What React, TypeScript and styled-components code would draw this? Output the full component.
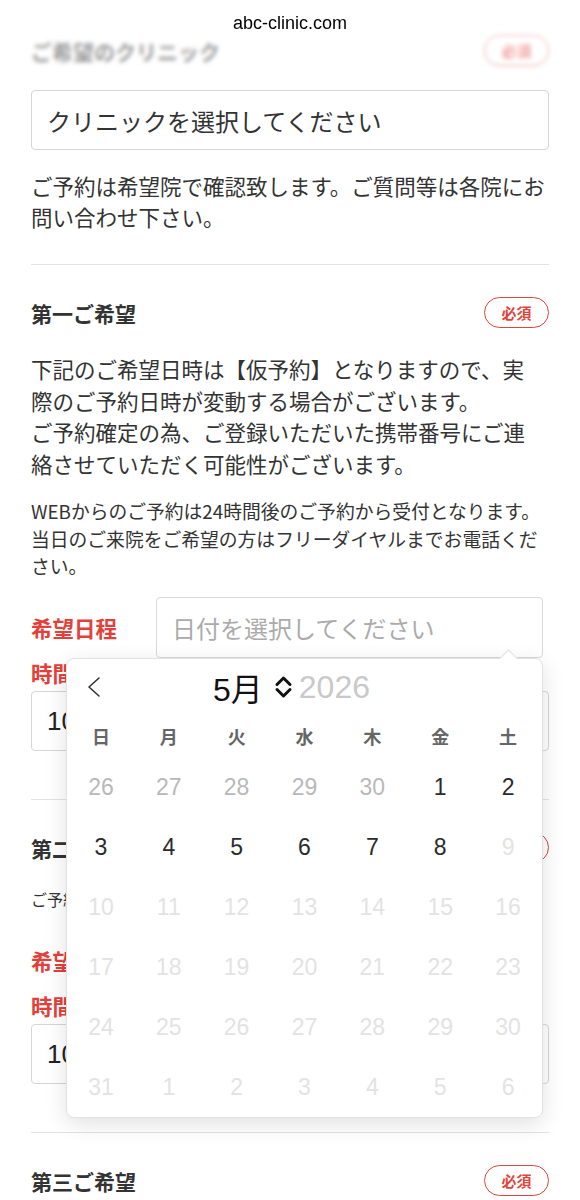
import styled, { createGlobalStyle } from "styled-components"

type DayKind = "outside" | "active" | "disabled"

const weekdays = ["日", "月", "火", "水", "木", "金", "土"]

const buildDays = () => {
  const days: { label: number; kind: DayKind }[] = []
  for (let d = 26; d <= 30; d++) days.push({ label: d, kind: "outside" })
  for (let d = 1; d <= 31; d++) days.push({ label: d, kind: d <= 8 ? "active" : "disabled" })
  for (let d = 1; d <= 6; d++) days.push({ label: d, kind: "disabled" })
  return days
}

const Calendar = () => (
  <Popover>
    <CalHeader>
      <svg width="14" height="22" viewBox="0 0 14 22">
        <polyline points="12,2 2,11 12,20" fill="none" stroke="#333" strokeWidth="1.6" strokeLinecap="round" strokeLinejoin="round" />
      </svg>
      <MonthTitle>
        <Month>5月</Month>
        <Stepper width="19" height="24" viewBox="0 0 19 24">
          <polyline points="3,9.5 9.5,3 16,9.5" fill="none" stroke="#111" strokeWidth="3" strokeLinecap="round" strokeLinejoin="round" />
          <polyline points="3,14.5 9.5,21 16,14.5" fill="none" stroke="#111" strokeWidth="3" strokeLinecap="round" strokeLinejoin="round" />
        </Stepper>
        <Year>2026</Year>
      </MonthTitle>
    </CalHeader>
    <WeekRow>
      {weekdays.map((w) => (
        <span key={w}>{w}</span>
      ))}
    </WeekRow>
    <DayGrid>
      {buildDays().map((d, i) => (
        <Day key={i} $kind={d.kind}>{d.label}</Day>
      ))}
    </DayGrid>
  </Popover>
)

const App = () => {
  return (
    <>
      <GlobalStyle />
      <TopBar>abc-clinic.com</TopBar>
      <Page>
        <Section $first>
          <HeaderRow>
            <Heading>ご希望のクリニック</Heading>
            <Badge>必須</Badge>
          </HeaderRow>
          <SelectBox>クリニックを選択してください</SelectBox>
          <Text $size="body" $gap={19.5}>
            ご予約は希望院で確認致します。ご質問等は各院にお<br />問い合わせ下さい。
          </Text>
        </Section>

        <Section>
          <HeaderRow>
            <Heading>第一ご希望</Heading>
            <Badge>必須</Badge>
          </HeaderRow>
          <Text $size="body" $gap={25}>
            下記のご希望日時は【仮予約】となりますので、実<br />
            際のご予約日時が変動する場合がございます。<br />
            ご予約確定の為、ご登録いただいた携帯番号にご連<br />
            絡させていただく可能性がございます。
          </Text>
          <Text $size="small" $gap={18}>
            WEBからのご予約は24時間後のご予約から受付となります。<br />
            当日のご来院をご希望の方はフリーダイヤルまでお電話くだ<br />
            さい。
          </Text>
          <DateRow $gap={17.5}>
            <FieldLabel>希望日程</FieldLabel>
            <DateField>
              日付を選択してください
              <Calendar />
            </DateField>
          </DateRow>
          <FieldLabel>時間</FieldLabel>
          <TimeField>10:00</TimeField>
        </Section>

        <Section>
          <HeaderRow>
            <Heading>第二ご希望</Heading>
            <Badge>必須</Badge>
          </HeaderRow>
          <Text $size="note" $gap={24}>
            ご予約状況により、ご希望に添えない場合がございます。
          </Text>
          <DateRow $gap={19}>
            <FieldLabel>希望日程</FieldLabel>
            <DateField>日付を選択してください</DateField>
          </DateRow>
          <FieldLabel>時間</FieldLabel>
          <TimeField>10:00</TimeField>
        </Section>

        <Section $last>
          <HeaderRow>
            <Heading>第三ご希望</Heading>
            <Badge>必須</Badge>
          </HeaderRow>
        </Section>
      </Page>
    </>
  )
}

export default App

const GlobalStyle = createGlobalStyle`
  body {
    margin: 0;
    background: #fff;
    color: #333;
    font-family: "Noto Sans CJK JP", sans-serif;
  }
`

const TopBar = styled.div`
  position: fixed;
  top: 0;
  left: 0;
  right: 0;
  height: 84px;
  box-sizing: border-box;
  padding-top: 12px;
  display: flex;
  justify-content: center;
  font-family: "Liberation Sans", sans-serif;
  font-size: 18px;
  line-height: 22px;
  color: #000;
  background: linear-gradient(to bottom, rgba(255, 255, 255, 0.7), rgba(255, 255, 255, 0.45) 80%, rgba(255, 255, 255, 0));
  backdrop-filter: blur(2px);
  z-index: 10;
`

const Page = styled.main`
  padding: 0 31px;
`

const Section = styled.section<{ $first?: boolean; $last?: boolean }>`
  padding: ${(p) => (p.$first ? "35px 0 31.5px" : "32px 0 48px")};
  border-bottom: ${(p) => (p.$last ? "none" : "1px solid #e3e3e3")};
`

const HeaderRow = styled.div`
  display: flex;
  justify-content: space-between;
  align-items: center;
  height: 31px;
`

const Heading = styled.h2`
  margin: 0;
  font-size: 21px;
  font-weight: 700;
  color: #333;
`

const Badge = styled.span`
  box-sizing: border-box;
  width: 65px;
  height: 31px;
  border: 1.5px solid #e0443c;
  border-radius: 16px;
  display: flex;
  align-items: center;
  justify-content: center;
  font-size: 15px;
  font-weight: 700;
  color: #e0443c;
`

const SelectBox = styled.div`
  margin-top: 24px;
  height: 60px;
  box-sizing: border-box;
  border: 1px solid #d6d6d6;
  border-radius: 4px;
  padding: 0 15px;
  display: flex;
  align-items: center;
  font-size: 24px;
  color: #333;
`

const textSizes = {
  body: "font-size: 21.5px; line-height: 31.5px;",
  small: "font-size: 18.8px; line-height: 27.5px;",
  note: "font-size: 16px; line-height: 24px;",
}

const Text = styled.p<{ $size: keyof typeof textSizes; $gap: number }>`
  margin: ${(p) => p.$gap}px 0 0;
  color: #333;
  white-space: nowrap;
  ${(p) => textSizes[p.$size]}
`

const DateRow = styled.div<{ $gap: number }>`
  margin-top: ${(p) => p.$gap}px;
  display: grid;
  grid-template-columns: 125px 387px;
  align-items: center;
`

const FieldLabel = styled.div`
  font-size: 21.5px;
  line-height: 30px;
  font-weight: 700;
  color: #e3403a;
`

const DateField = styled.div`
  position: relative;
  height: 61px;
  box-sizing: border-box;
  border: 1px solid #d9d9d9;
  border-radius: 4px;
  padding: 0 15px;
  display: flex;
  align-items: center;
  font-size: 24px;
  color: #ababab;
`

const TimeField = styled.div`
  margin-top: 3px;
  height: 60px;
  box-sizing: border-box;
  border: 1px solid #d6d6d6;
  border-radius: 4px;
  padding: 0 15px;
  display: flex;
  align-items: center;
  font-family: "Liberation Sans", sans-serif;
  font-size: 26px;
  color: #222;
`

const Popover = styled.div`
  position: absolute;
  top: calc(100% + 1px);
  right: -1px;
  width: 477px;
  box-sizing: border-box;
  background: #fff;
  border: 1px solid #e2e2e2;
  border-radius: 8px;
  box-shadow: 0 6px 22px rgba(0, 0, 0, 0.12);
  color: #333;
  z-index: 5;

  &::before {
    content: "";
    position: absolute;
    top: -7px;
    right: 27px;
    width: 12px;
    height: 12px;
    background: #fff;
    border-top: 1px solid #e2e2e2;
    border-left: 1px solid #e2e2e2;
    transform: rotate(45deg);
  }
`

const CalHeader = styled.div`
  height: 56px;
  display: flex;
  align-items: center;
  padding-left: 20px;
`

const MonthTitle = styled.div`
  margin-left: 112px;
  display: flex;
  align-items: center;
  font-family: "Liberation Sans", "Noto Sans CJK JP", sans-serif;
  font-size: 32px;
`

const Month = styled.span`
  color: #111;
`

const Stepper = styled.svg`
  margin: 0 6px 0 11px;
`

const Year = styled.span`
  color: #c9c9c9;
`

const WeekRow = styled.div`
  display: grid;
  grid-template-columns: repeat(7, 1fr);
  height: 42px;
  align-items: center;
  text-align: center;
  font-size: 18px;
  font-weight: 700;
  color: #666;
`

const dayColors: Record<DayKind, string> = {
  outside: "#b9b9b9",
  active: "#2b2b2b",
  disabled: "#e3e3e3",
}

const DayGrid = styled.div`
  display: grid;
  grid-template-columns: repeat(7, 1fr);
  grid-auto-rows: 60px;
`

const Day = styled.div<{ $kind: DayKind }>`
  display: flex;
  align-items: center;
  justify-content: center;
  font-family: "Liberation Sans", sans-serif;
  font-size: 23px;
  color: ${(p) => dayColors[p.$kind]};
`
